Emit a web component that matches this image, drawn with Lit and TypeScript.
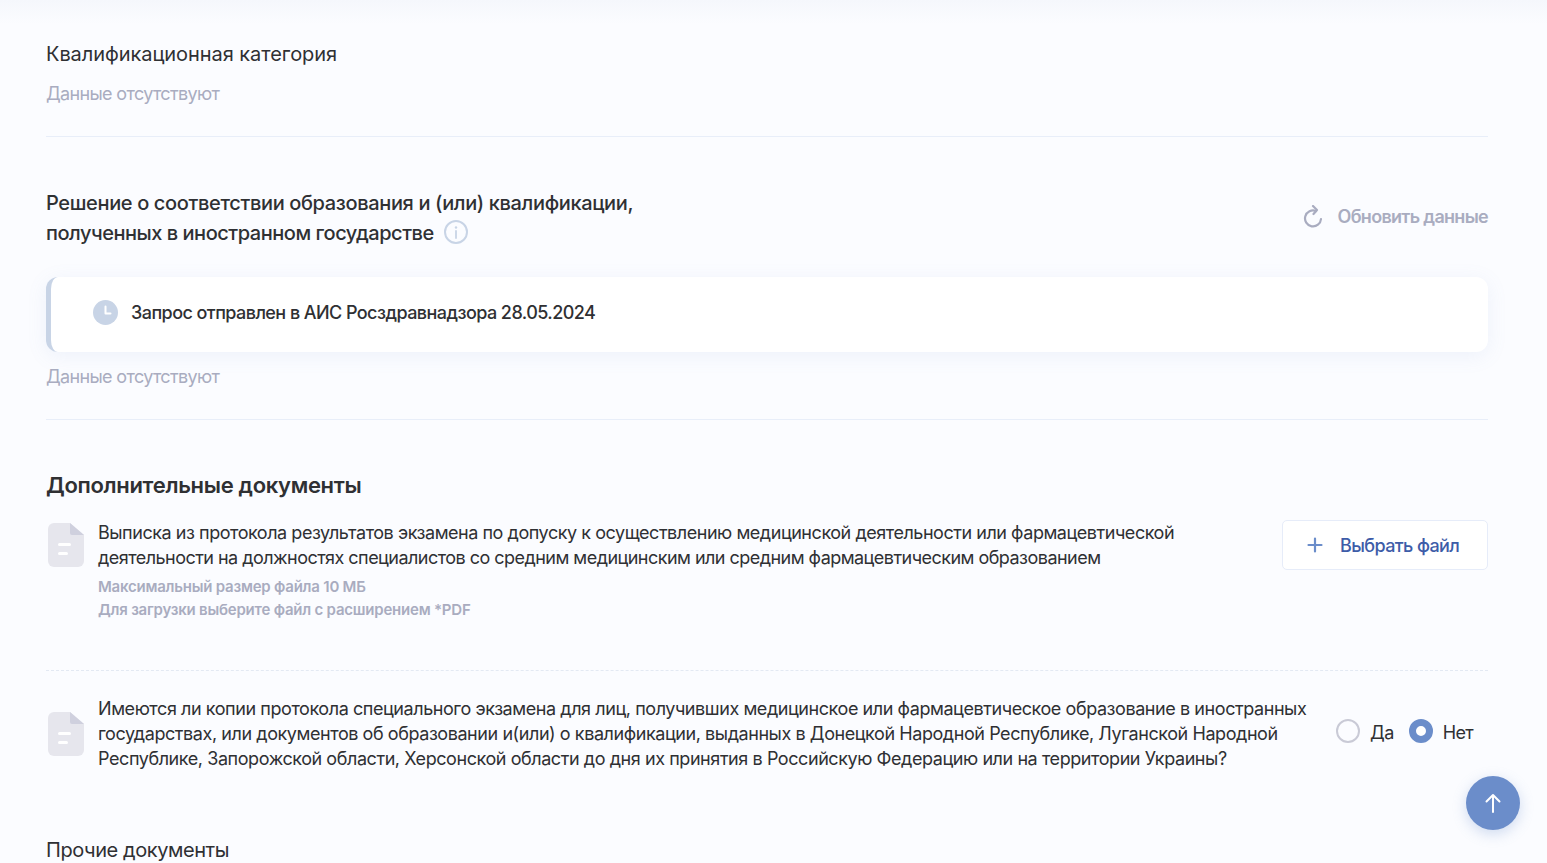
import {css, html, LitElement} from 'lit';
import {customElement} from 'lit/decorators.js';

const docIcon = html`
    <svg class="docIcon" width="36" height="44" viewBox="0 0 36 44">
        <path d="M6 0H22L36 12V38a6 6 0 0 1-6 6H6a6 6 0 0 1-6-6V6a6 6 0 0 1 6-6Z" fill="#e6e6ed"/>
        <path d="M22 0 36 12H24a2 2 0 0 1-2-2Z" fill="#cfd0de"/>
        <rect x="10" y="20" width="13" height="3" rx="1.5" fill="#fff"/>
        <rect x="10" y="29" width="10" height="3" rx="1.5" fill="#fff"/>
    </svg>`;

@customElement("app-root")
export class AppRoot extends LitElement {

    static styles = css`
        :host {
            display: block;
            position: relative;
            height: 863px;
            overflow: hidden;
            background: #fbfcff;
            font-family: Inter, "Noto Sans", sans-serif;
            color: #2f3033;
            font-size: 18px;
            letter-spacing: -0.46px;
        }

        .topShade {
            position: absolute;
            left: 0;
            right: 0;
            top: 0;
            height: 24px;
            background: linear-gradient(#f5f7fc, #fbfcff);
        }

        .page {
            position: relative;
            padding: 39px 59px 0 46px;
        }

        .title {
            font-size: 20px;
            line-height: 30px;
            font-weight: 500;
            letter-spacing: -0.36px;
        }

        .tight {
            letter-spacing: -0.47px;
        }

        .empty {
            color: #a9acc0;
            line-height: 26px;
            letter-spacing: -0.66px;
        }

        .section {
            border-bottom: 1px solid #e8eef9;
        }

        .first {
            height: 97px;
        }

        .first .title {
            font-weight: 400;
            letter-spacing: -0.06px;
        }

        .first .empty {
            margin-top: 12px;
        }

        .second {
            margin-top: 51px;
            height: 231px;
        }

        .second .empty {
            margin-top: 12px;
        }

        .head {
            display: flex;
            justify-content: space-between;
            align-items: center;
            height: 60px;
        }

        .titleInfo {
            display: inline-block;
            vertical-align: -4px;
            margin: -4px 0 0 5px;
        }

        .refresh {
            display: flex;
            align-items: center;
            gap: 15px;
            margin-bottom: 3px;
            color: #a9acc0;
            font-weight: 600;
            letter-spacing: -0.7px;
        }

        .notice {
            display: flex;
            align-items: center;
            gap: 13px;
            height: 75px;
            margin-top: 29px;
            padding: 0 0 4px 42px;
            box-sizing: border-box;
            background: #fff;
            border-left: 5px solid #c8d4e6;
            border-radius: 12px;
            box-shadow: 0 4px 20px rgba(120, 150, 210, 0.1);
            font-weight: 500;
            letter-spacing: -0.56px;
        }

        h2 {
            margin: 50px 0 0;
            font-size: 22px;
            line-height: 30px;
            font-weight: 600;
            letter-spacing: -0.32px;
        }

        .docRow {
            display: flex;
            align-items: flex-start;
            gap: 14px;
            padding-left: 2px;
        }

        .docIcon {
            flex: none;
        }

        .docText {
            flex: 1;
            line-height: 25px;
        }

        .upload {
            margin-top: 20px;
            height: 150px;
            border-bottom: 1px dashed #e3e9f3;
        }

        .upload .docIcon {
            margin-top: 3px;
        }

        .narrowLine {
            letter-spacing: -0.53px;
        }

        .hint {
            color: #a9acc0;
            font-size: 15px;
            line-height: 23px;
            font-weight: 600;
            letter-spacing: -0.22px;
        }

        .hints {
            margin-top: 5px;
        }

        .upload .docText {
            padding-right: 80px;
        }

        .fileButton {
            flex: none;
            display: flex;
            align-items: center;
            gap: 16px;
            width: 206px;
            height: 50px;
            padding-left: 23px;
            box-sizing: border-box;
            background: #fff;
            border: 1px solid #e6ecf9;
            border-radius: 5px;
            color: #3d5ca8;
            font-weight: 500;
            letter-spacing: -0.6px;
        }

        .question {
            margin-top: 25px;
            align-items: center;
        }

        .question .docText {
            flex: none;
            width: 1220px;
            letter-spacing: -0.43px;
        }

        .radios {
            display: flex;
            align-items: center;
            margin: 0 0 6px 4px;
            letter-spacing: -0.6px;
        }

        .radio {
            display: flex;
            align-items: center;
            gap: 10px;
            margin-right: 15px;
        }

        .radioLabel {
            padding-top: 4px;
        }

        .dot {
            width: 24px;
            height: 24px;
            box-sizing: border-box;
            border: 2px solid #c9cad6;
            border-radius: 50%;
        }

        .dot.on {
            border: 7px solid #6b8dca;
            background: #fff;
        }

        .last {
            margin-top: 64px;
            font-weight: 400;
            letter-spacing: -0.42px;
        }

        .toTop {
            position: absolute;
            left: 1466px;
            top: 776px;
            width: 54px;
            height: 54px;
            display: flex;
            align-items: center;
            justify-content: center;
            border-radius: 50%;
            background: #6b8dca;
            box-shadow: 0 4px 14px rgba(107, 141, 202, 0.3);
        }
    `;

    render() {
        return html`
            <div class="topShade"></div>
            <div class="page">
                <div class="section first">
                    <div class="title">Квалификационная категория</div>
                    <div class="empty">Данные отсутствуют</div>
                </div>

                <div class="section second">
                    <div class="head">
                        <div class="title">
                            Решение о соответствии образования и (или) квалификации,<br>
                            <span class="tight">полученных в иностранном государстве</span>
                            <svg class="titleInfo" width="24" height="24" viewBox="0 0 24 24" fill="none">
                                <circle cx="12" cy="12" r="11" stroke="#c8d4e6" stroke-width="2"/>
                                <circle cx="12" cy="7.5" r="1.2" fill="#c8d4e6"/>
                                <path d="M12 11v7" stroke="#c8d4e6" stroke-width="1.8" stroke-linecap="round"/>
                            </svg>
                        </div>
                        <div class="refresh">
                            <svg width="20" height="23" viewBox="0 0 20 23" fill="none">
                                <path d="M13 6A8 8 0 1 0 18 14" stroke="#a9acc0" stroke-width="2.2" stroke-linecap="round"/>
                                <path d="M10 1l4 4-3.5 4" stroke="#a9acc0" stroke-width="2.2" stroke-linecap="round" stroke-linejoin="round"/>
                            </svg>
                            Обновить данные
                        </div>
                    </div>
                    <div class="notice">
                        <svg width="25" height="25" viewBox="0 0 25 25">
                            <circle cx="12.5" cy="12.5" r="12.5" fill="#c8d4e6"/>
                            <path d="M12.5 6.5v7h5" fill="none" stroke="#fff" stroke-width="2" stroke-linecap="round" stroke-linejoin="round"/>
                        </svg>
                        Запрос отправлен в АИС Росздравнадзора 28.05.2024
                    </div>
                    <div class="empty">Данные отсутствуют</div>
                </div>

                <h2>Дополнительные документы</h2>

                <div class="docRow upload">
                    ${docIcon}
                    <div class="docText">
                        Выписка из протокола результатов экзамена по допуску к осуществлению медицинской деятельности или фармацевтической
                        <span class="narrowLine">деятельности на должностях специалистов со средним медицинским или средним фармацевтическим образованием</span>
                        <div class="hints">
                            <div class="hint">Максимальный размер файла 10 МБ</div>
                            <div class="hint">Для загрузки выберите файл с расширением *PDF</div>
                        </div>
                    </div>
                    <div class="fileButton">
                        <svg width="18" height="18" viewBox="0 0 18 18">
                            <path d="M9 2.5v13M2.5 9h13" stroke="#6b8dca" stroke-width="2.2" stroke-linecap="round"/>
                        </svg>
                        Выбрать файл
                    </div>
                </div>

                <div class="docRow question">
                    ${docIcon}
                    <div class="docText">
                        Имеются ли копии протокола специального экзамена для лиц, получивших медицинское или фармацевтическое образование в иностранных государствах, или документов об образовании и(или) о квалификации, выданных в Донецкой Народной Республике, Луганской Народной Республике, Запорожской области, Херсонской области до дня их принятия в Российскую Федерацию или на территории Украины?
                    </div>
                    <div class="radios">
                        <div class="radio"><span class="dot"></span><span class="radioLabel">Да</span></div>
                        <div class="radio"><span class="dot on"></span><span class="radioLabel">Нет</span></div>
                    </div>
                </div>

                <div class="title last">Прочие документы</div>
            </div>
            <div class="toTop">
                <svg width="20" height="22" viewBox="0 0 20 22" fill="none">
                    <path d="M10 20V3M3.5 9.5 10 3l6.5 6.5" stroke="#fff" stroke-width="2" stroke-linecap="round" stroke-linejoin="round"/>
                </svg>
            </div>
        `
    }
}
